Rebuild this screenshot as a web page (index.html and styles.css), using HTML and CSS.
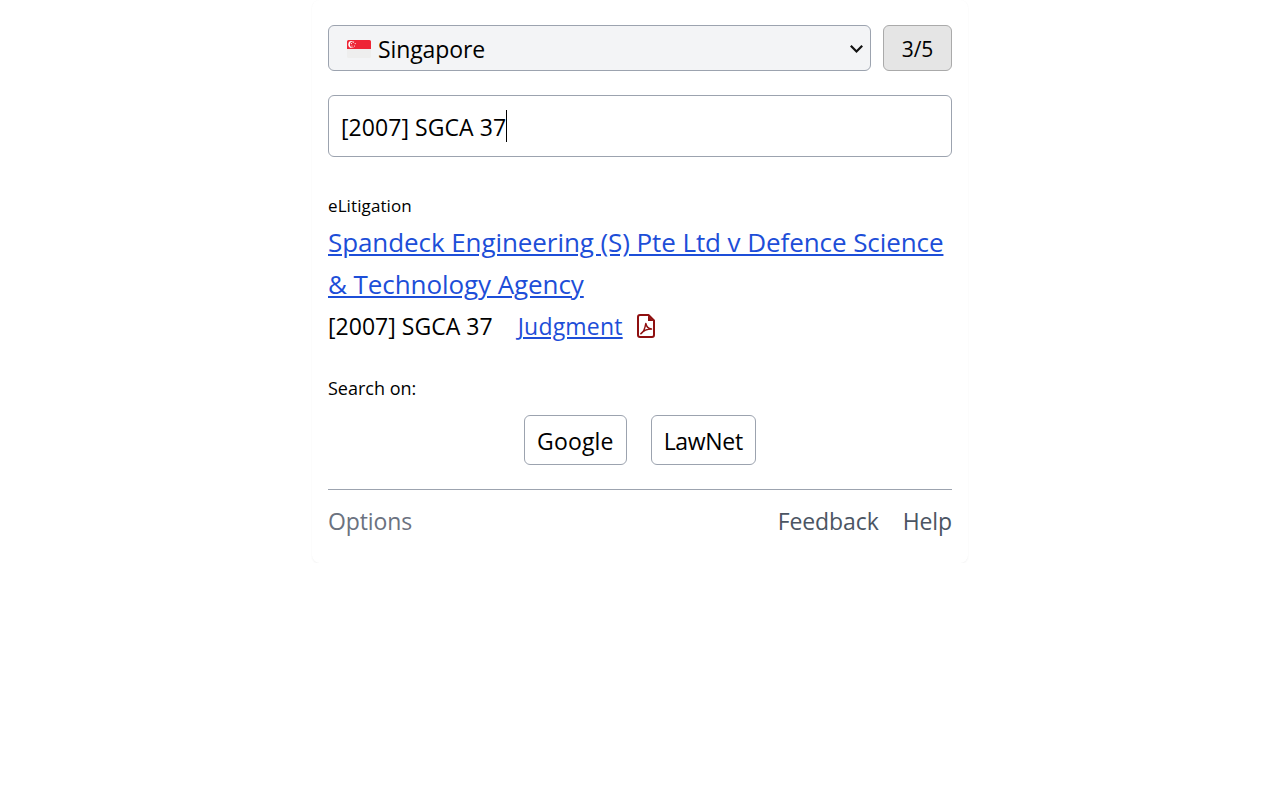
FILE: index.html
```html
<!DOCTYPE html>
<html lang="en">
<head>
<meta charset="utf-8">
<title>Case Search</title>
<link rel="stylesheet" href="styles.css">
</head>
<body>
<main class="card">
  <div class="top-row">
    <div class="select-wrap">
      <svg class="flag" width="24" height="18" viewBox="0 0 24 18" aria-hidden="true">
        <path d="M0 9v-7.500a1.500 1.500 0 0 1 1.500-1.500h21a1.500 1.500 0 0 1 1.500 1.500v7.500z" fill="#ee2536"/>
        <path d="M0 9h24v7.500a1.500 1.500 0 0 1-1.500 1.500h-21a1.500 1.500 0 0 1-1.500-1.500z" fill="#eeeeee"/>
        <circle cx="4.700" cy="4.500" r="3.400" fill="#fff"/>
        <circle cx="6" cy="4.500" r="3.100" fill="#ee2536"/>
        <g fill="#fff"><circle cx="6.200" cy="2.300" r=".6"/><circle cx="8.200" cy="3.600" r=".6"/><circle cx="7.500" cy="6" r=".6"/><circle cx="5" cy="6" r=".6"/><circle cx="4.400" cy="3.600" r=".6"/></g>
      </svg>
      <select class="country"><option>Singapore</option></select>
      <svg class="chevron" width="15" height="10" viewBox="0 0 15 10" aria-hidden="true">
        <path d="M1.800 1.800l5.700 5.700l5.700-5.700" fill="none" stroke="#111" stroke-width="2.200"/>
      </svg>
    </div>
    <button class="count">3/5</button>
  </div>
  <div class="query-wrap">
    <input class="query" type="text" value="[2007] SGCA 37">
    <span class="caret"></span>
  </div>
  <section class="result">
    <div class="source">eLitigation</div>
    <a class="title" href="#">Spandeck Engineering (S) Pte Ltd v Defence Science &amp; Technology Agency</a>
    <div class="meta">
      <span>[2007] SGCA 37</span>
      <a class="judgment" href="#">Judgment</a>
      <svg class="pdf" width="18" height="24" viewBox="0 0 18 24" aria-hidden="true">
        <path d="M3 1h8.500l5.500 5.500v14.500a2 2 0 0 1-2 2h-12a2 2 0 0 1-2-2v-18a2 2 0 0 1 2-2z" fill="none" stroke="#8f1010" stroke-width="2" stroke-linejoin="round"/>
        <path d="M11 1.500v5.500h5.500z" fill="#8f1010"/>
        <path d="M3.800 19.800c2.200-1.200 4.200-5.400 5-10.300c.6 3 2.500 5.200 5.700 5.600c-3.800 0-7.800 1.400-10.700 4.700z" fill="none" stroke="#8f1010" stroke-width="1.500" stroke-linejoin="round"/>
      </svg>
    </div>
  </section>
  <div class="search-label">Search on:</div>
  <div class="engines">
    <button class="engine engine-google">Google</button>
    <button class="engine engine-lawnet">LawNet</button>
  </div>
  <footer class="foot">
    <a class="foot-link options" href="#">Options</a>
    <nav class="foot-right">
      <a class="foot-link" href="#">Feedback</a>
      <a class="foot-link" href="#">Help</a>
    </nav>
  </footer>
</main>
</body>
</html>
```
FILE: styles.css
```css
* { box-sizing: border-box; }
html, body { margin: 0; padding: 0; background: #fff; }
body { font-family: "Open Sans", "Noto Sans", sans-serif; color: #000; }
.card {
  width: 656px;
  margin: 0 auto;
  padding: 25px 16px 24px;
  border-radius: 8px;
  box-shadow: 0 1px 2px rgba(0,0,0,.05), 0 0 1px rgba(0,0,0,.03);
}
.top-row { display: flex; gap: 12px; }
.select-wrap { position: relative; flex: 1; display: flex; }
.flag { position: absolute; left: 19px; top: 15px; pointer-events: none; }
.chevron { position: absolute; right: 7px; top: 19px; pointer-events: none; }
.country {
  width: 100%;
  height: 46px;
  padding: 2px 8px 0 49px;
  font: 23px "Open Sans", sans-serif;
  letter-spacing: -.1px;
  color: #000;
  background: #f3f4f6;
  border: 1px solid #9ca3af;
  border-radius: 6px;
  outline: none;
  appearance: none;
}
.count {
  width: 69px;
  height: 46px;
  padding: 2px 0 0;
  font: 21px "Open Sans", sans-serif;
  color: #000;
  background: #e5e5e5;
  border: 1px solid #aaa;
  border-radius: 6px;
}
.query-wrap { position: relative; margin-top: 24px; }
.query {
  display: block;
  width: 100%;
  height: 62px;
  padding: 2px 12px 0;
  font: 23px "Open Sans", sans-serif;
  letter-spacing: .06px;
  color: #000;
  background: #fff;
  border: 1px solid #9ca3af;
  border-radius: 6px;
  outline: none;
}
.caret { position: absolute; left: 178px; top: 15px; width: 1px; height: 32px; background: #000; }
.result { margin-top: 36px; }
.source { font-size: 17px; line-height: 25px; letter-spacing: .1px; }
.title {
  display: block;
  margin-top: 3px;
  font-size: 26px;
  line-height: 42px;
  letter-spacing: -.08px;
  color: #1d4ed8;
}
.meta { display: flex; align-items: center; height: 42px; font-size: 23px; letter-spacing: .03px; }
.judgment { margin-left: 25px; color: #1d4ed8; letter-spacing: .2px; }
.pdf { margin-left: 14px; }
.search-label { margin-top: 29px; font-size: 18px; line-height: 25px; }
.engines { display: flex; justify-content: center; gap: 24px; margin-top: 14px; }
.engine {
  height: 50px;
  padding: 2px 12px 0;
  font: 23px "Open Sans", sans-serif;
  color: #000;
  background: #fff;
  border: 1px solid #9ca3af;
  border-radius: 6px;
}
.engine-google { letter-spacing: .15px; }
.engine-lawnet { letter-spacing: -.3px; }
.foot {
  display: flex;
  justify-content: space-between;
  margin-top: 24px;
  padding-top: 13px;
  border-top: 1px solid #9ca3af;
}
.foot-right { display: flex; gap: 24px; }
.foot-link { font-size: 23px; line-height: 36px; letter-spacing: -.1px; color: #4b5563; text-decoration: none; }
.options { color: #6b7280; }
```
